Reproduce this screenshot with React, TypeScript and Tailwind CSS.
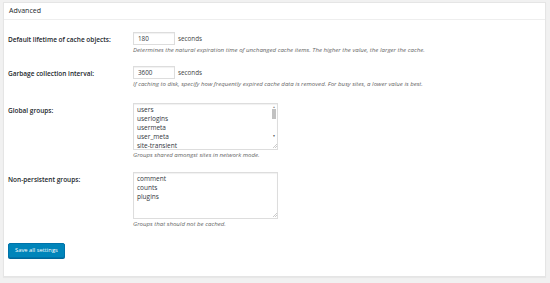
const font = { fontFamily: '"Open Sans", "Liberation Sans", sans-serif' }

function Label({ children }: { children: React.ReactNode }) {
  return (
    <div className="w-[125px] shrink-0 pt-[1px] text-[6.5px] font-semibold leading-[13px] text-[#23282d]">
      {children}
    </div>
  )
}

function Desc({ children }: { children: React.ReactNode }) {
  return <p className="mt-[1px] text-[6.1px] italic leading-[8px] text-[#666]">{children}</p>
}

function NumberRow({ label, value, desc }: { label: string; value: string; desc: string }) {
  return (
    <div className="flex">
      <Label>{label}</Label>
      <div>
        <div className="flex items-center gap-[3px]">
          <input
            readOnly
            value={value}
            className="h-[13px] w-[42px] border border-[#ddd] bg-white px-[4px] text-[6.3px] text-[#32373c] shadow-[inset_0_1px_1px_rgba(0,0,0,0.06)] outline-none"
            style={font}
          />
          <span className="text-[6.3px] text-[#444]">seconds</span>
        </div>
        <Desc>{desc}</Desc>
      </div>
    </div>
  )
}

function Groups({ label, items, desc, scroll }: { label: string; items: string[]; desc: string; scroll?: boolean }) {
  return (
    <div className="flex">
      <Label>{label}</Label>
      <div>
        <div className="flex h-[47px] w-[145px] border border-[#ddd] bg-white shadow-[inset_0_1px_1px_rgba(0,0,0,0.06)]">
          <div className="flex-1 overflow-hidden px-[3px] pt-[1px] text-[6.5px] leading-[9px] text-[#32373c]">
            {items.map((it) => (
              <div key={it}>{it}</div>
            ))}
          </div>
          <div className="flex w-[6px] flex-col items-center">
            {scroll ? (
              <>
                <span className="mt-[1px] text-[3px] leading-[4px] text-[#888]">▲</span>
                <div className="h-[10px] w-[4px] bg-[#c1c1c1]" />
                <div className="flex-1" />
                <span className="text-[3px] leading-[4px] text-[#333]">▼</span>
                <div className="h-[6px]" />
              </>
            ) : (
              <div className="flex-1" />
            )}
            <svg width="4" height="4" viewBox="0 0 4 4" className="mb-[1px] self-end">
              <path d="M4 0 L0 4 M4 2 L2 4" stroke="#999" strokeWidth="0.5" />
            </svg>
          </div>
        </div>
        <Desc>{desc}</Desc>
      </div>
    </div>
  )
}

export default function App() {
  return (
    <div className="h-[283px] w-[550px] bg-[#f1f1f1] pt-[2px] pl-[3px] pr-[4px]" style={font}>
      <div className="h-[275px] border border-[#e5e5e5] bg-white shadow-[0_1px_1px_rgba(0,0,0,0.04)]">
        <div className="flex h-[17px] items-center border-b border-[#eee] px-[5px] text-[7px] text-[#23282d]">
          Advanced
        </div>
        <div className="px-[4px] pt-[12px]">
          <NumberRow
            label="Default lifetime of cache objects:"
            value="180"
            desc="Determines the natural expiration time of unchanged cache items. The higher the value, the larger the cache."
          />
          <div className="mt-[12px]">
            <NumberRow
              label="Garbage collection interval:"
              value="3600"
              desc="If caching to disk, specify how frequently expired cache data is removed. For busy sites, a lower value is best."
            />
          </div>
          <div className="mt-[15px]">
            <Groups
              label="Global groups:"
              items={['users', 'userlogins', 'usermeta', 'user_meta', 'site-transient']}
              desc="Groups shared amongst sites in network mode."
              scroll
            />
          </div>
          <div className="mt-[13px]">
            <Groups
              label="Non-persistent groups:"
              items={['comment', 'counts', 'plugins']}
              desc="Groups that should not be cached."
            />
          </div>
          <button className="mt-[15px] h-[15px] rounded-[2px] border border-[#0073aa] bg-[#0085ba] px-[6px] text-[5.8px] leading-[13px] text-white shadow-[0_1px_0_#006799]">
            Save all settings
          </button>
        </div>
      </div>
    </div>
  )
}
